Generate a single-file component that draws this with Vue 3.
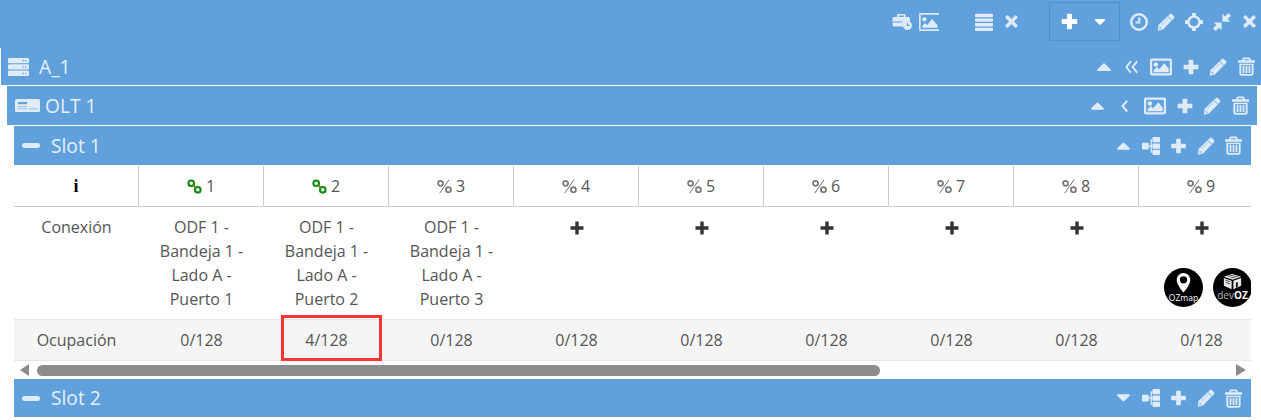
<script setup>
const cols = [1, 2, 3, 4, 5, 6, 7, 8, 9]
const linked = { 1: true, 2: true }
const connected = { 1: true, 2: true, 3: true }
const occupancy = (n) => (n === 2 ? '4/128' : '0/128')
</script>

<template>
  <div class="page">
    <svg class="defs" width="0" height="0" aria-hidden="true">
      <symbol id="plus" viewBox="0 0 24 24"><path d="M9.500 1h5a1 1 0 0 1 1 1v6.500H22a1 1 0 0 1 1 1v5a1 1 0 0 1-1 1h-6.500V22a1 1 0 0 1-1 1h-5a1 1 0 0 1-1-1v-6.500H2a1 1 0 0 1-1-1v-5a1 1 0 0 1 1-1h6.500V2a1 1 0 0 1 1-1z" /></symbol>
      <symbol id="times" viewBox="0 0 24 24"><path d="M6.500 2.500 12 8l5.500-5.500a1.500 1.500 0 0 1 2 0l2 2a1.500 1.500 0 0 1 0 2L16 12l5.500 5.500a1.500 1.500 0 0 1 0 2l-2 2a1.500 1.500 0 0 1-2 0L12 16l-5.500 5.500a1.500 1.500 0 0 1-2 0l-2-2a1.500 1.500 0 0 1 0-2L8 12 2.500 6.500a1.500 1.500 0 0 1 0-2l2-2a1.500 1.500 0 0 1 2 0z" /></symbol>
      <symbol id="pencil" viewBox="0 0 24 24"><path d="M17 1.500a2.200 2.200 0 0 1 3 0l2.500 2.500a2.200 2.200 0 0 1 0 3L8 22 1 23.500 2 16z" /><path d="M14.600 4.400 19.600 9.400" stroke="#5fa0dd" stroke-width="1.100" fill="none" /><path d="M5.200 15.800 15.500 6.800" stroke="#5fa0dd" stroke-width="1" fill="none" opacity=".55" /><path d="M3.600 17.800 6.700 20.800 3 21.500z" fill="#5fa0dd" opacity=".6" /></symbol>
      <symbol id="trash" viewBox="1 0 22 24"><path fill-rule="evenodd" d="M8.500 .5h7a1.500 1.500 0 0 1 1.400 1L18 4h4a1 1 0 0 1 1 1v2.200H1V5a1 1 0 0 1 1-1h4l1.100-2.500a1.500 1.500 0 0 1 1.400-1zM9.200 2.500 8.500 4h7l-.7-1.500zM2.800 8.500h18.400V21a3 3 0 0 1-3 3H5.800a3 3 0 0 1-3-3zM5.200 10v10.500a1.200 1.200 0 0 0 1.200 1.200h11.200a1.200 1.200 0 0 0 1.200-1.200V10z" /><rect x="7" y="11" width="2.300" height="9.500" /><rect x="10.850" y="11" width="2.300" height="9.500" /><rect x="14.700" y="11" width="2.300" height="9.500" /></symbol>
      <symbol id="image" viewBox="0 0 30 24"><path fill-rule="evenodd" d="M2.500 .5h25a2.500 2.500 0 0 1 2.500 2.500v18a2.500 2.500 0 0 1-2.500 2.500h-25A2.500 2.500 0 0 1 0 21V3A2.500 2.500 0 0 1 2.500 .5zM3 3.500v17h24v-17z" /><circle cx="8" cy="8.500" r="3" /><path d="M5 19v-3l4.500-4 3 3 7-8 6 7v5z" /></symbol>
      <symbol id="picture" viewBox="0 0 30 27"><path fill-rule="evenodd" d="M0 0h30v2.500H0zM0 24.500h30V27H0zM0 2h2.500v23H0z" /><circle cx="8" cy="9.500" r="3.200" /><path d="M5 22v-3l4.500-4 3 3 7-9 8 9v4z" /></symbol>
      <symbol id="bars" viewBox="0 0 24 24"><rect x="0" y="1" width="24" height="4.500" rx="1" /><rect x="0" y="7.200" width="24" height="4.500" rx="1" /><rect x="0" y="13.400" width="24" height="4.500" rx="1" /><rect x="0" y="19.600" width="24" height="4.400" rx="1" /></symbol>
      <symbol id="caret-up" viewBox="0 0 14 8"><path d="M6 .7a1.400 1.400 0 0 1 2 0l5.700 5.700c.6.600.2 1.600-.7 1.600H1C.1 8-.3 7 .3 6.400z" /></symbol>
      <symbol id="caret-down" viewBox="0 0 14 8"><path d="M6 7.300a1.400 1.400 0 0 0 2 0l5.700-5.700C14.300 1 13.900 0 13 0H1C.1 0-.3 1 .3 1.600z" /></symbol>
      <symbol id="angle" viewBox="0 0 8 14"><path d="M8 1.500 3.300 7 8 12.500 6.300 14 .2 7 6.300 0z" /></symbol>
      <symbol id="angles" viewBox="0 0 14 14"><path d="M7 1.500 2.800 7 7 12.500 5.700 14 .1 7 5.700 0zM13.800 1.500 9.600 7l4.200 5.500-1.300 1.500L6.900 7l5.600-7z" /></symbol>
      <symbol id="clock" viewBox="0 0 24 24"><path fill-rule="evenodd" d="M12 0a12 12 0 1 1 0 24 12 12 0 0 1 0-24zm0 3.300a8.700 8.700 0 1 0 0 17.400 8.700 8.700 0 0 0 0-17.400zM11 6h2.800v8H7.500v-2.800H11z" /></symbol>
      <symbol id="crosshair" viewBox="0 0 24 24"><path fill-rule="evenodd" d="M9.500 0h5v3.300a9 9 0 0 1 6.200 6.200H24v5h-3.300a9 9 0 0 1-6.200 6.200V24h-5v-3.300a9 9 0 0 1-6.200-6.200H0v-5h3.300a9 9 0 0 1 6.200-6.200zM12 6.200a5.800 5.800 0 1 0 0 11.600 5.800 5.800 0 0 0 0-11.600z" /></symbol>
      <symbol id="compress" viewBox="0 0 24 24"><path d="M11.500 12.500V23L8 19.500 3.500 24 0 20.500 4.500 16 1 12.500zM12.500 11.500V1L16 4.500 20.500 0 24 3.500 19.500 8 23 11.500z" /></symbol>
      <symbol id="sitemap" viewBox="0 0 24 24"><rect x="0" y="7.500" width="9" height="9" rx="1" /><rect x="14" y="0" width="10" height="7" rx="1" /><rect x="14" y="8.500" width="10" height="7" rx="1" /><rect x="14" y="17" width="10" height="7" rx="1" /><path d="M9 11h2.500V3H14v1.800h-.8v6.200H14v2h-.8v6.200h.8V21h-2.500v-8H9z" /></symbol>
      <symbol id="server" viewBox="0 0 21 18"><rect width="21" height="5.300" rx="1.300" /><rect y="6.300" width="21" height="5.300" rx="1.300" /><rect y="12.600" width="21" height="5.400" rx="1.300" /><g fill="#5fa0dd"><rect x="14.500" y="2" width="1.400" height="1.200" /><rect x="17" y="2" width="1.400" height="1.200" /><rect x="14.500" y="8.400" width="1.400" height="1.200" /><rect x="17" y="8.400" width="1.400" height="1.200" /><rect x="14.500" y="14.800" width="1.400" height="1.200" /><rect x="17" y="14.800" width="1.400" height="1.200" /></g></symbol>
      <symbol id="olt" viewBox="0 0 25 13"><rect width="25" height="13" rx="1.500" /><rect x="3" y="3" width="9" height="2.200" fill="#5fa0dd" /><rect x="3" y="7" width="9" height="1" fill="#9cc4ea" /><rect x="3" y="9.300" width="9" height="1" fill="#9cc4ea" /><rect x="14" y="9.300" width="8.500" height="1.200" fill="#9cc4ea" /></symbol>
      <symbol id="minus" viewBox="0 0 18 5"><rect width="18" height="5" rx="2.300" /></symbol>
      <symbol id="case-clock" viewBox="0 0 20 16"><path fill-rule="evenodd" d="M6 0h6.500a1 1 0 0 1 1 1v2h3a1.500 1.500 0 0 1 1.500 1.500V7a6 6 0 0 0-7 5.500H2A1.500 1.500 0 0 1 .5 11V4.500A1.500 1.500 0 0 1 2 3h3V1a1 1 0 0 1 1-1zm.7 1.500V3h5.100V1.500zM.5 7.500h10v1H.5z" /><path fill-rule="evenodd" d="M15.500 7a4.500 4.500 0 1 1 0 9 4.500 4.500 0 0 1 0-9zm-.6 2v3h2.800v-1h-1.700V9z" /></symbol>
      <symbol id="link" viewBox="0 0 16 16"><g fill="none" stroke-width="2.200"><circle cx="4.500" cy="4.500" r="3" stroke="#0c8a12" /><circle cx="11.500" cy="11.500" r="3" stroke="#0c8a12" /><path d="M6.500 6.500 9.500 9.500" stroke="#6d8a14" /></g></symbol>
      <symbol id="unlink" viewBox="0 0 16 16"><g fill="none" stroke="#777" stroke-width="1.800"><circle cx="3.800" cy="4.600" r="2.700" /><circle cx="12.200" cy="11.400" r="2.700" /><path d="M12.800 .8 2.800 15.200" stroke="#666" stroke-width="1" /></g></symbol>
      <symbol id="plus-dark" viewBox="0 0 14 14"><path d="M5.300.5h3.400v4.800h4.800v3.400H8.700v4.800H5.300V8.700H.5V5.300h4.800z" /></symbol>
      <symbol id="pin" viewBox="0 0 16 22"><path fill-rule="evenodd" d="M8 0a7.500 7.500 0 0 1 7.500 7.500C15.500 12 11 18 8 21.500 5 18 .5 12 .5 7.500A7.500 7.500 0 0 1 8 0zm0 3.500a4 4 0 1 0 0 8 4 4 0 0 0 0-8z" /></symbol>
      <symbol id="cube" viewBox="0 0 22 18"><path d="M11 0 21 3.500 11 7 1 3.500zM1 5l9 3.200V18l-9-4zM12 8.200 21 5v9l-9 4z" /><path d="M3 7.500l5 1.800M3 10l5 1.800M6 3 15 .9M9 5l9-2.500" stroke="#000" stroke-width=".8" fill="none" /><path d="M15 10.500l2-1v6l-2 1z" fill="#000" /></symbol>
    </svg>

    <header class="topbar">
      <div class="tools">
        <svg class="ic w20 h16"><use href="#case-clock" /></svg>
        <svg class="ic w20 h18 near"><use href="#picture" /></svg>
        <svg class="ic w18 h18 far"><use href="#bars" /></svg>
        <svg class="ic w15 h15 wide"><use href="#times" /></svg>
        <div class="split">
          <svg class="ic w17 h17 bright"><use href="#plus" /></svg>
          <svg class="ic w12 h6 bright"><use href="#caret-down" /></svg>
        </div>
        <svg class="ic w18 h18"><use href="#clock" /></svg>
        <svg class="ic w18 h18 tight"><use href="#pencil" /></svg>
        <svg class="ic w18 h18"><use href="#crosshair" /></svg>
        <svg class="ic w18 h18"><use href="#compress" /></svg>
        <svg class="ic w15 h15 wide"><use href="#times" /></svg>
      </div>
    </header>

    <section class="level level-a">
      <div class="bar bar-a">
        <svg class="ic lead w21 h18"><use href="#server" /></svg>
        <span class="title title-a">A_1</span>
        <div class="actions">
          <svg class="ic w14 h8"><use href="#caret-up" /></svg>
          <svg class="ic w13 h14 gap14"><use href="#angles" /></svg>
          <svg class="ic w22 h18 wide"><use href="#image" /></svg>
          <svg class="ic w16 h16"><use href="#plus" /></svg>
          <svg class="ic w18 h18 tight"><use href="#pencil" /></svg>
          <svg class="ic w17 h19"><use href="#trash" /></svg>
        </div>
      </div>

      <section class="level level-b">
        <div class="bar">
          <svg class="ic lead w25 h13"><use href="#olt" /></svg>
          <span class="title title-b">OLT 1</span>
          <div class="actions">
            <svg class="ic w13 h8"><use href="#caret-up" /></svg>
            <svg class="ic w7 h14 wider"><use href="#angle" /></svg>
            <svg class="ic w22 h18 gap16"><use href="#image" /></svg>
            <svg class="ic w16 h16"><use href="#plus" /></svg>
            <svg class="ic w18 h18 tight"><use href="#pencil" /></svg>
            <svg class="ic w17 h19"><use href="#trash" /></svg>
          </div>
        </div>

        <section class="level level-c">
          <div class="bar">
            <svg class="ic lead-minus w18 h5"><use href="#minus" /></svg>
            <span class="title title-c">Slot 1</span>
            <div class="actions slim">
              <svg class="ic w13 h8"><use href="#caret-up" /></svg>
              <svg class="ic w18 h18 gap12"><use href="#sitemap" /></svg>
              <svg class="ic w17 h16"><use href="#plus" /></svg>
              <svg class="ic w18 h18"><use href="#pencil" /></svg>
              <svg class="ic w17 h19"><use href="#trash" /></svg>
            </div>
          </div>

          <div class="table-wrap">
            <div class="grid head">
              <div class="cell head-cell"><span class="info">i</span></div>
              <div v-for="n in cols" :key="n" class="cell head-cell">
                <svg class="port"><use :href="linked[n] ? '#link' : '#unlink'" /></svg>
                <span>{{ n }}</span>
              </div>
            </div>
            <div class="grid conn">
              <div class="cell conn-cell">Conexión</div>
              <div v-for="n in cols" :key="n" class="cell conn-cell">
                <template v-if="connected[n]">ODF 1 -<br />Bandeja 1 -<br />Lado A -<br />Puerto {{ n }}</template>
                <svg v-else class="add"><use href="#plus-dark" /></svg>
              </div>
            </div>
            <div class="grid occ">
              <div class="cell occ-cell">Ocupación</div>
              <div v-for="n in cols" :key="n" class="cell occ-cell">{{ occupancy(n) }}</div>
            </div>
            <div class="highlight"></div>
            <div class="badges">
              <div class="badge">
                <svg class="pin"><use href="#pin" /></svg>
                <span class="badge-text oz">OZmap</span>
              </div>
              <div class="badge">
                <svg class="cube"><use href="#cube" /></svg>
                <span class="badge-text dev">dev<b>OZ</b></span>
              </div>
            </div>
            <div class="scroll">
              <span class="arrow left"></span>
              <div class="track"><div class="thumb"></div></div>
              <span class="arrow right"></span>
            </div>
          </div>

          <div class="bar bar-last">
            <svg class="ic lead-minus w18 h5"><use href="#minus" /></svg>
            <span class="title title-c">Slot 2</span>
            <div class="actions slim">
              <svg class="ic w13 h8"><use href="#caret-down" /></svg>
              <svg class="ic w18 h18 gap12"><use href="#sitemap" /></svg>
              <svg class="ic w17 h16"><use href="#plus" /></svg>
              <svg class="ic w18 h18"><use href="#pencil" /></svg>
              <svg class="ic w17 h19"><use href="#trash" /></svg>
            </div>
          </div>
        </section>
      </section>
    </section>
  </div>
</template>

<style>
html, body { background: #fff; overflow: hidden; }
</style>

<style scoped>
.page {
  width: 1261px;
  height: 420px;
  overflow: hidden;
  font-family: "Open Sans", "Liberation Sans", sans-serif;
  color: #555;
  background: #fff;
}
.defs { position: absolute; }
.ic { fill: #dfecf8; color: #dfecf8; flex: none; display: block; }
.bright { fill: #fbfdff; }
.w7 { width: 7px; } .w12 { width: 12px; } .w13 { width: 13px; } .w14 { width: 14px; }
.w15 { width: 15px; } .w16 { width: 16px; } .w17 { width: 17px; } .w18 { width: 18px; }
.w20 { width: 20px; } .w21 { width: 21px; } .w22 { width: 22px; } .w25 { width: 25px; }
.h5 { height: 5px; } .h6 { height: 6px; } .h8 { height: 8px; } .h13 { height: 13px; }
.h14 { height: 14px; } .h15 { height: 15px; } .h16 { height: 16px; } .h17 { height: 17px; }
.h18 { height: 18px; } .h19 { height: 19px; }

.topbar {
  height: 48px;
  box-sizing: border-box;
  padding: 2px 4px 0 0;
  background: #5fa0dd;
}
.tools {
  display: flex;
  align-items: center;
  justify-content: flex-end;
  height: 39px;
  gap: 10px;
}
.near { margin-left: -3px; }
.far { margin-left: 26px; }
.tight { margin-left: -1px; }
.split {
  display: flex;
  align-items: center;
  gap: 16px;
  box-sizing: border-box;
  width: 71px;
  height: 39px;
  margin: 0 0 0 20px;
  padding-left: 11px;
  border: 1px solid #4f8fcb;
}

.level-a { margin-left: 1px; }
.level-b { margin: 1px 4px 0 6px; }
.level-c { margin: 1px 6px 0 7px; }

.bar {
  display: flex;
  align-items: center;
  height: 39px;
  background: #5fa0dd;
}
.bar-a { height: 37px; }
.lead { margin-left: 7px; }
.lead-minus { margin-left: 8px; }
.level-b > .bar .lead { margin-left: 8px; }
.title {
  font-size: 19.200px;
  line-height: 24px;
  color: #e8f1fa;
}
.title-a { margin-left: 10px; }
.title-b { margin-left: 5px; }
.title-c { margin-left: 11px; }
.actions {
  display: flex;
  align-items: center;
  gap: 11px;
  margin-left: auto;
  padding-right: 8px;
}
.bar-a .actions { padding-right: 6px; }
.actions.slim { gap: 10px; padding-right: 9px; }
.wide { margin-left: 1px; }
.wider { margin-left: 6px; }
.gap14 { margin-left: 3px; }
.gap16 { margin-left: 5px; }
.gap12 { margin-left: 2px; }

.table-wrap {
  position: relative;
  overflow: hidden;
  font-size: 16px;
}
.grid {
  display: grid;
  grid-template-columns: repeat(10, 125px);
  width: 1250px;
}
.head { height: 42px; box-sizing: border-box; border-bottom: 1px solid #ccc; padding-top: 1px; }
.head-cell {
  display: flex;
  align-items: center;
  justify-content: center;
  gap: 4px;
  box-sizing: border-box;
  border-right: 1px solid #ccc;
}
.info {
  font-family: "Liberation Serif", serif;
  font-weight: 700;
  font-size: 18px;
  color: #000;
}
.port { width: 15px; height: 15px; }
.conn { height: 112px; }
.conn-cell {
  box-sizing: border-box;
  padding-top: 8px;
  text-align: center;
  line-height: 24px;
}
.add { display: block; width: 14px; height: 14px; margin: 6px auto 0; fill: #333; }
.occ {
  height: 42px;
  box-sizing: border-box;
  background: #f5f5f5;
  border-top: 1px solid #e6e6e6;
  border-bottom: 1px solid #e6e6e6;
  width: 100%;
}
.occ-cell {
  text-align: center;
  line-height: 40px;
}
.highlight {
  position: absolute;
  left: 267px;
  top: 150px;
  width: 101px;
  height: 46px;
  box-sizing: border-box;
  border: 3px solid #f33;
}
.badges {
  position: absolute;
  top: 103px;
  left: 1150px;
  display: flex;
  gap: 10px;
}
.badge {
  position: relative;
  display: flex;
  flex-direction: column;
  align-items: center;
  flex: none;
  width: 39px;
  height: 39px;
  border-radius: 50%;
  background: #000;
  color: #fff;
}
.pin { width: 15px; height: 20px; margin-top: 5px; fill: #fff; }
.cube { width: 19px; height: 17px; margin-top: 5px; fill: #e8e8e8; }
.badge-text { line-height: 10px; white-space: nowrap; }
.oz { font-size: 8.500px; }
.dev { font-size: 10px; color: #bbb; }
.dev b { color: #fff; }
.scroll {
  display: flex;
  align-items: center;
  height: 18px;
  padding: 0 5px;
  box-sizing: border-box;
  background: #fff;
}
.arrow { flex: none; width: 0; height: 0; border-top: 6px solid transparent; border-bottom: 6px solid transparent; }
.arrow.left { border-right: 9px solid #8c8c8c; margin-left: 1px; }
.arrow.right { border-left: 10px solid #8c8c8c; }
.track { flex: 1; height: 11px; padding: 0 9px 0 8px; }
.thumb { width: 843px; height: 11px; border-radius: 5.500px; background: #8c8c8c; }
.bar-last { height: 38px; }
</style>
